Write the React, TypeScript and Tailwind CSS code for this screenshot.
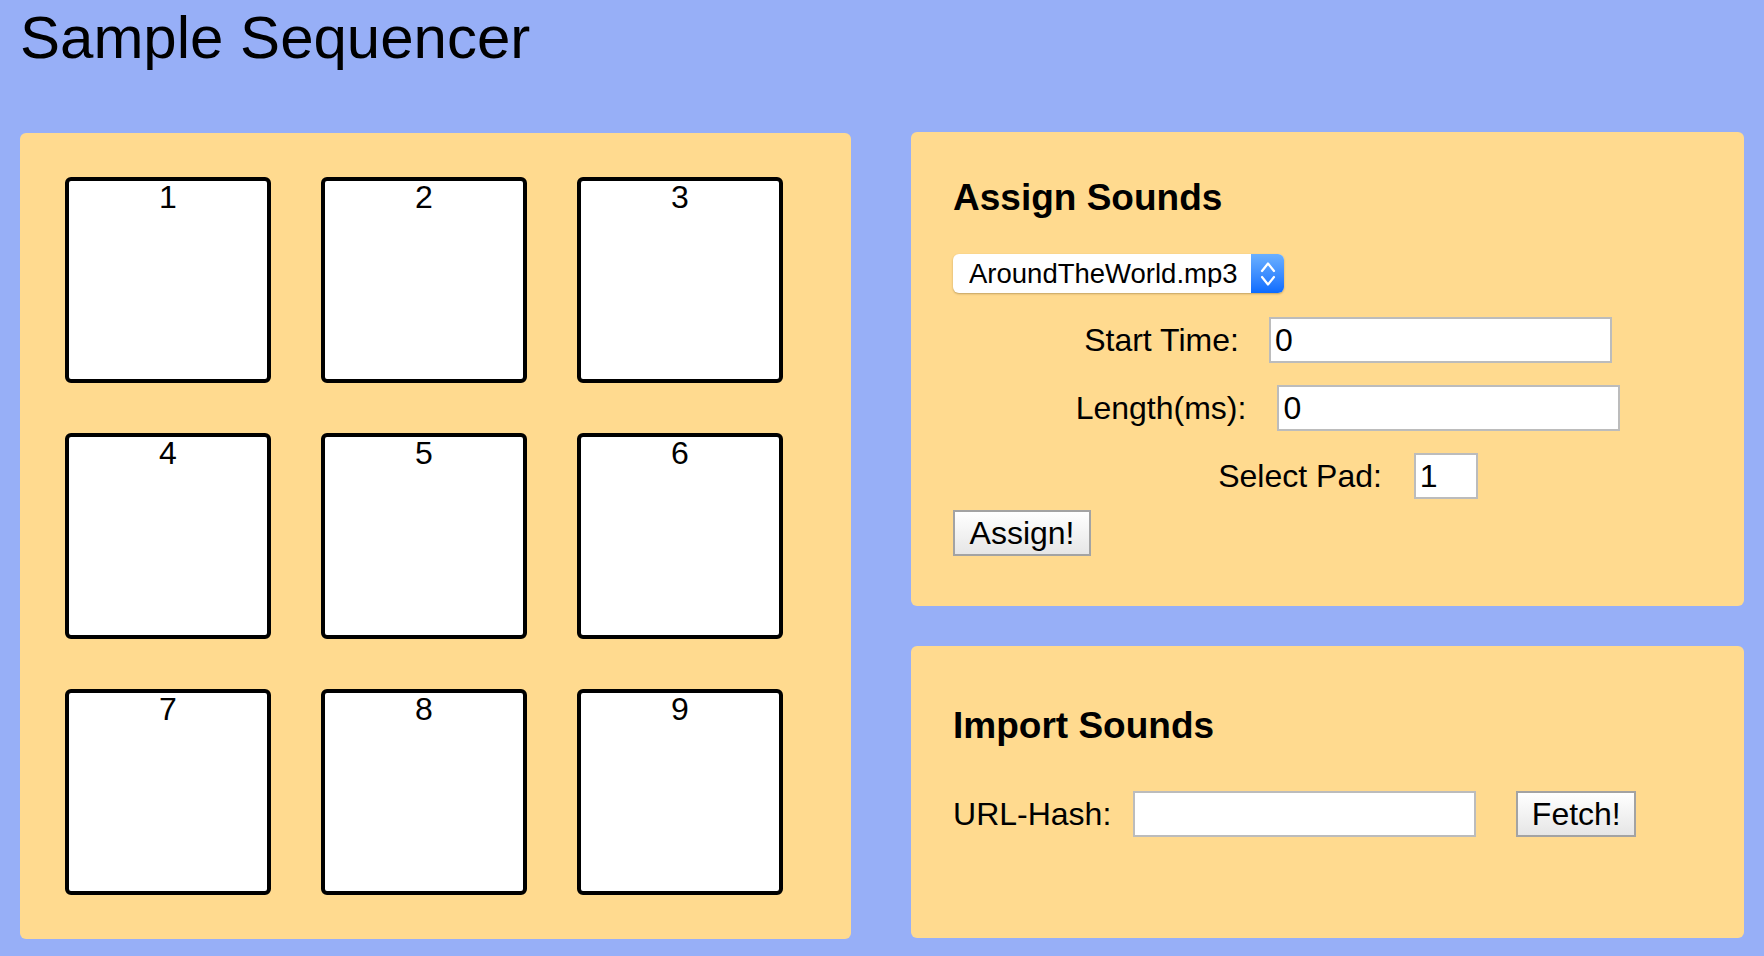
import React from "react";

const pads = [1, 2, 3, 4, 5, 6, 7, 8, 9];

function Pad({ n }: { n: number }) {
  return (
    <div className="w-[206px] h-[206px] border-4 border-black rounded-[6px] bg-white text-center text-[32px] leading-none">
      {n}
    </div>
  );
}

function TextField({ value, width }: { value?: string; width: string }) {
  return (
    <input
      type="text"
      defaultValue={value}
      className={`${width} h-[46px] border-2 border-[#bcbcbc] bg-white pl-[4px] text-[32px] leading-none text-black outline-none`}
    />
  );
}

function MacButton({ label, width }: { label: string; width: string }) {
  return (
    <button
      className={`${width} h-[46px] border-2 border-[#a3a3a3] bg-gradient-to-b from-[#ffffff] to-[#e6e6e6] text-[32px] leading-none text-black`}
    >
      {label}
    </button>
  );
}

function SoundSelect() {
  return (
    <div className="mt-[38px] flex w-[331px] h-[39px] rounded-[6px] bg-white shadow-[0_1px_2px_rgba(120,90,40,0.45)] overflow-hidden">
      <select className="flex-1 appearance-none bg-transparent pl-[16px] text-[27.5px] leading-none text-black outline-none">
        <option>AroundTheWorld.mp3</option>
      </select>
      <div className="w-[33px] h-full bg-gradient-to-b from-[#6bb0ff] to-[#0a6bff] flex items-center justify-center">
        <svg width="16" height="28" viewBox="0 0 16 28" fill="none">
          <path d="M2 11 L8 3.5 L14 11" stroke="white" strokeWidth="2.2" strokeLinecap="round" strokeLinejoin="round" />
          <path d="M2 17 L8 24.5 L14 17" stroke="white" strokeWidth="2.2" strokeLinecap="round" strokeLinejoin="round" />
        </svg>
      </div>
    </div>
  );
}

export default function App() {
  return (
    <main className="min-h-screen bg-[#97aff7] px-[20px] text-black font-['Liberation_Sans',Arial,sans-serif]">
      <h1 className="pt-[8px] text-[60px] leading-none font-normal">Sample Sequencer</h1>

      <div className="mt-[64px] flex items-start gap-[60px]">
        {/* pads */}
        <section className="mt-px w-[832px] h-[806px] rounded-[6px] bg-[#ffda8f] pl-[45px] pt-[44px]">
          <div className="grid grid-cols-[repeat(3,206px)] gap-[50px]">
            {pads.map((n) => (
              <Pad key={n} n={n} />
            ))}
          </div>
        </section>

        <div className="flex w-[834px] flex-col gap-[40px]">
          {/* assign */}
          <section className="h-[474px] rounded-[6px] bg-[#ffda8f] pl-[42px] pt-[47px]">
            <h3 className="text-[37px] font-bold leading-none">Assign Sounds</h3>
            <SoundSelect />
            <div className="w-[790px]">
              <div className="mt-[24px] flex items-center justify-center gap-[30px]">
                <span className="text-[32px] leading-none">Start Time:</span>
                <TextField value="0" width="w-[343px]" />
              </div>
              <div className="mt-[22px] flex items-center justify-center gap-[31px]">
                <span className="text-[32px] leading-none">Length(ms):</span>
                <TextField value="0" width="w-[343px]" />
              </div>
              <div className="mt-[22px] flex items-center justify-center gap-[32px]">
                <span className="text-[32px] leading-none">Select Pad:</span>
                <TextField value="1" width="w-[64px]" />
              </div>
            </div>
            <div className="mt-[11px]">
              <MacButton label="Assign!" width="w-[138px]" />
            </div>
          </section>

          {/* import */}
          <section className="h-[292px] rounded-[6px] bg-[#ffda8f] pl-[42px] pt-[61px]">
            <h3 className="text-[37px] font-bold leading-none">Import Sounds</h3>
            <div className="mt-[47px] flex items-center">
              <span className="text-[32px] leading-none">URL-Hash:</span>
              <div className="ml-[22px]">
                <TextField width="w-[343px]" />
              </div>
              <div className="ml-[40px]">
                <MacButton label="Fetch!" width="w-[120px]" />
              </div>
            </div>
          </section>
        </div>
      </div>
    </main>
  );
}
